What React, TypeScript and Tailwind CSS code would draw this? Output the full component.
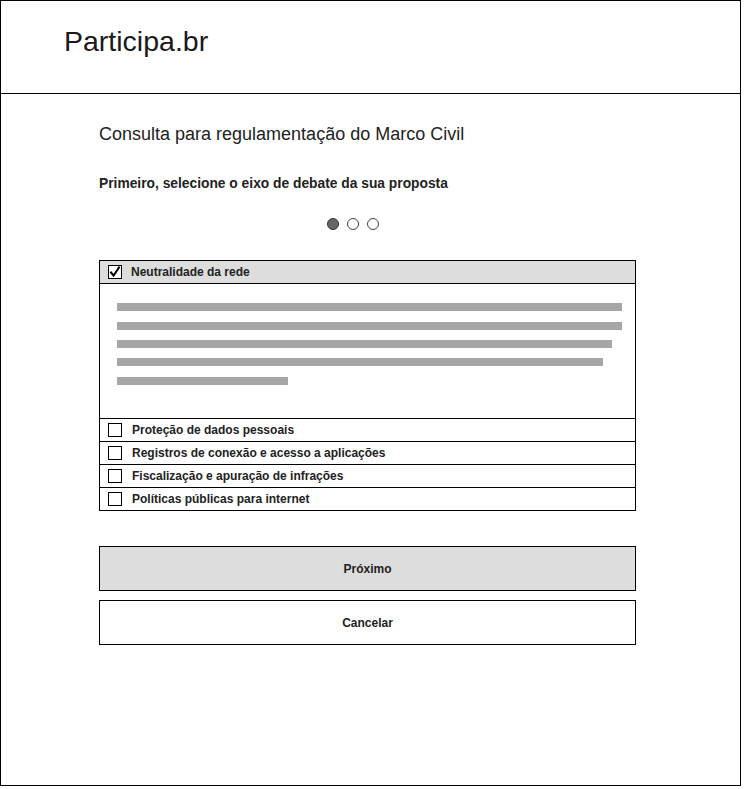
const font = { fontFamily: '"Liberation Sans", Arial, sans-serif' };

const bars = [
  'w-[505px] mt-0',
  'w-[505px] mt-[11px]',
  'w-[495px] mt-[10px]',
  'w-[486px] mt-[10px]',
  'w-[171px] mt-[11px]',
];

const options = [
  'Proteção de dados pessoais',
  'Registros de conexão e acesso a aplicações',
  'Fiscalização e apuração de infrações',
  'Políticas públicas para internet',
];

function Checkbox({ checked }: { checked?: boolean }) {
  return (
    <div className="w-[14px] h-[14px] border border-black bg-white flex items-center justify-center shrink-0">
      {checked && (
        <svg width="12" height="12" viewBox="0 0 12 12" fill="none" stroke="black" strokeWidth="2" strokeLinecap="square">
          <path d="M2 6.5 L4.6 9.5 L10 1.5" />
        </svg>
      )}
    </div>
  );
}

export default function App() {
  return (
    <div className="w-[741px] h-[786px] border border-black bg-white text-[#222]" style={font}>
      {/* Header */}
      <div className="h-[93px] border-b border-black pl-[63px] pt-[24px]">
        <span className="text-[28.5px] leading-[32px] text-[#1a1a1a]">Participa.br</span>
      </div>

      <div className="pl-[98px] w-[635px]">
        <h1 className="mt-[30px] text-[18px] leading-[21px] font-normal">
          Consulta para regulamentação do Marco Civil
        </h1>
        <p className="mt-[31px] text-[13.8px] leading-[16px] font-bold">
          Primeiro, selecione o eixo de debate da sua proposta
        </p>

        {/* Steps */}
        <div className="mt-[26px] flex gap-[8px] pl-[228px]">
          <span className="w-[12px] h-[12px] rounded-full bg-[#666] border border-[#333]" />
          <span className="w-[12px] h-[12px] rounded-full bg-white border border-[#444]" />
          <span className="w-[12px] h-[12px] rounded-full bg-white border border-[#444]" />
        </div>

        {/* Axis list */}
        <div className="mt-[30px] border border-black divide-y divide-black text-[12px] font-bold">
          <div className="h-[23px] bg-[#dddddd] flex items-center pl-[8px] gap-[9px]">
            <Checkbox checked />
            <span>Neutralidade da rede</span>
          </div>
          <div className="h-[135px] pl-[17px] pt-[19px] flex flex-col">
            {bars.map((w, i) => (
              <div key={i} className={`${w} h-[8px] bg-[#a6a6a6]`} />
            ))}
          </div>
          {options.map((o, i) => (
            <div
              key={o}
              className={`${i === options.length - 1 ? 'h-[22px]' : 'h-[23px]'} flex items-center pl-[8px] gap-[10px]`}
            >
              <Checkbox />
              <span>{o}</span>
            </div>
          ))}
        </div>

        {/* Actions */}
        <button className="mt-[35px] w-full h-[45px] border border-black bg-[#dddddd] text-[12px] font-bold">
          Próximo
        </button>
        <button className="mt-[9px] w-full h-[45px] border border-black bg-white text-[12px] font-bold">
          Cancelar
        </button>
      </div>
    </div>
  );
}
